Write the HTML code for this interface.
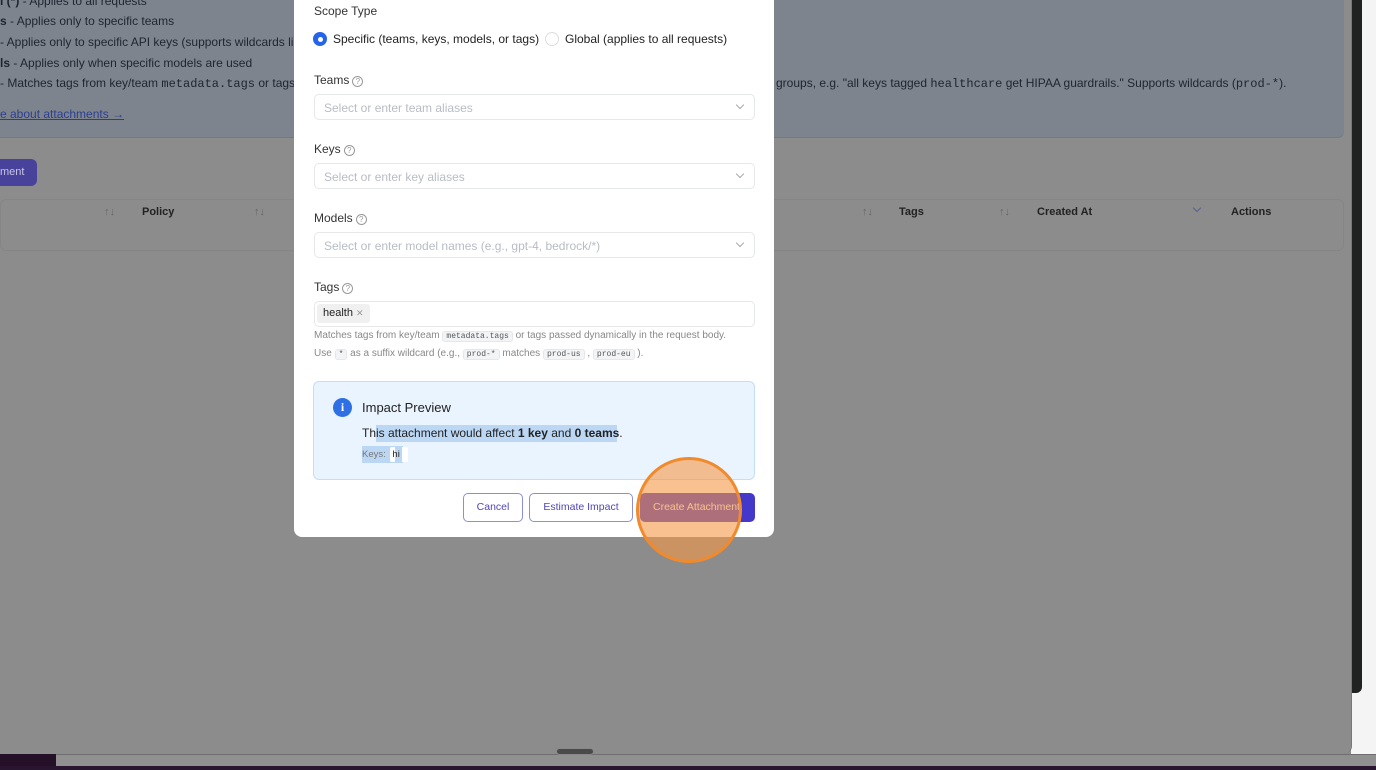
<!DOCTYPE html>
<html><head><meta charset="utf-8"><style>
*{box-sizing:border-box;margin:0;padding:0}
body{width:1376px;height:770px;overflow:hidden;background:#8c8c8c;font-family:"Liberation Sans",sans-serif;position:relative;color:#1f2937}
.a{position:absolute;white-space:nowrap}
.bgt{font-size:12px;color:#1e2530}
.mono{font-family:"Liberation Mono",monospace}
.lbl{font-size:12px;color:#333}
.sel{position:absolute;left:314px;width:441px;height:26px;border:1px solid #e5e7eb;border-radius:5px;background:#fff;font-size:12px;color:#b8bcc4;padding:6px 9px}
.sel::after{content:"";position:absolute;right:11px;top:7px;width:5px;height:5px;border-right:1px solid #aaa;border-bottom:1px solid #aaa;transform:rotate(45deg)}
.q{display:inline-block;width:11px;height:11px;border:1px solid #999;border-radius:50%;font-size:8px;line-height:9px;text-align:center;color:#999;vertical-align:0px;margin-left:3px}
code{font-family:"Liberation Mono",monospace;font-size:8px;background:#f3f4f6;border:1px solid #e5e7eb;border-radius:3px;padding:0 3px;color:#555}
.btn{position:absolute;top:493px;height:29px;border:1px solid #8b8fd8;border-radius:5px;background:#fff;font-size:10.5px;color:#4f46b5;text-align:center;line-height:27px;font-weight:500}
</style></head><body>
<div class="a" style="left:0;top:0;width:1344px;height:138px;background:#7e848d;border-bottom:1px solid #737a84;border-radius:0 0 6px 0"></div>
<div class="a bgt" style="left:0;top:-6px"><b>l (*)</b> - Applies to all requests</div>
<div class="a bgt" style="left:0;top:14px"><b>s</b> - Applies only to specific teams</div>
<div class="a bgt" style="left:0;top:35px">- Applies only to specific API keys (supports wildcards lik</div>
<div class="a bgt" style="left:0;top:56px"><b>ls</b> - Applies only when specific models are used</div>
<div class="a bgt" style="left:0;top:76px">- Matches tags from key/team <span class="mono">metadata.tags</span> or tags p</div>
<div class="a bgt" style="left:776px;top:76px">groups, e.g. "all keys tagged <span class="mono">healthcare</span> get HIPAA guardrails." Supports wildcards (<span class="mono">prod-*</span>).</div>
<div class="a bgt" style="left:0;top:107px;color:#2b3f8f;text-decoration:underline">e about attachments →</div>
<div class="a" style="left:-10px;top:159px;width:47px;height:27px;background:#48429a;border-radius:6px;color:#c6c4e8;font-size:11px;line-height:27px;padding-left:10px">ment</div>
<div class="a" style="left:0;top:199px;width:1344px;height:52px;border:1px solid #858585;border-radius:6px"></div>
<div class="a" style="left:104px;top:206px;font-size:11px;color:#666">↑↓</div>
<div class="a" style="left:142px;top:206px;font-size:11px;font-weight:bold;color:#222">Policy</div>
<div class="a" style="left:254px;top:206px;font-size:11px;color:#666">↑↓</div>
<div class="a" style="left:862px;top:206px;font-size:11px;color:#666">↑↓</div>
<div class="a" style="left:899px;top:206px;font-size:11px;font-weight:bold;color:#222">Tags</div>
<div class="a" style="left:999px;top:206px;font-size:11px;color:#666">↑↓</div>
<div class="a" style="left:1037px;top:206px;font-size:11px;font-weight:bold;color:#222">Created At</div>
<div class="a" style="left:1194px;top:205px;width:6px;height:6px;border-right:1px solid #5a6090;border-bottom:1px solid #5a6090;transform:rotate(45deg)"></div>
<div class="a" style="left:1231px;top:206px;font-size:11px;font-weight:bold;color:#222">Actions</div>
<div class="a" style="left:1351px;top:0;width:25px;height:770px;background:#f4f4f4"></div>
<div class="a" style="left:1351px;top:0;width:11px;height:693px;background:#1f2220;border-radius:0 0 6px 0"></div>
<div class="a" style="left:1344px;top:0;width:8px;height:754px;background:#8c8c8c;border-right:1px solid #777;border-radius:0 0 8px 0"></div>
<div class="a" style="left:0;top:754px;width:1376px;height:16px;background:#909090;border-top:1px solid #6e6e6e"></div>
<div class="a" style="left:0;top:754px;width:56px;height:16px;background:#241128"></div>
<div class="a" style="left:0;top:766px;width:1376px;height:4px;background:#2a1530"></div>
<div class="a" style="left:556px;top:748px;width:38px;height:7px;background:#4a4a4a;border-radius:4px;border:1px solid #888"></div>
<div class="a" style="left:294px;top:-10px;width:480px;height:547px;background:#fff;border-radius:8px"></div>
<div class="a lbl" style="left:314px;top:4px">Scope Type</div>
<div class="a" style="left:313px;top:32px;width:14px;height:14px;border-radius:50%;background:#2563eb"></div>
<div class="a" style="left:317.5px;top:36.5px;width:5px;height:5px;border-radius:50%;background:#fff"></div>
<div class="a" style="left:333px;top:32px;font-size:12px;color:#222">Specific (teams, keys, models, or tags)</div>
<div class="a" style="left:545px;top:32px;width:14px;height:14px;border-radius:50%;border:1px solid #ddd"></div>
<div class="a" style="left:565px;top:32px;font-size:12px;color:#222">Global (applies to all requests)</div>
<div class="a lbl" style="left:314px;top:73px">Teams<span class="q">?</span></div>
<div class="sel" style="top:94px">Select or enter team aliases</div>
<div class="a lbl" style="left:314px;top:142px">Keys<span class="q">?</span></div>
<div class="sel" style="top:163px">Select or enter key aliases</div>
<div class="a lbl" style="left:314px;top:211px">Models<span class="q">?</span></div>
<div class="sel" style="top:232px">Select or enter model names (e.g., gpt-4, bedrock/*)</div>
<div class="a lbl" style="left:314px;top:280px">Tags<span class="q">?</span></div>
<div class="a" style="left:314px;top:301px;width:441px;height:26px;border:1px solid #e5e7eb;border-radius:5px"></div>
<div class="a" style="left:317px;top:304px;width:53px;height:19px;background:#f0f0f0;border-radius:3px;font-size:11px;color:#222;padding:3px 6px">health <span style="color:#999;font-size:9px">✕</span></div>
<div class="a" style="left:314px;top:330px;font-size:10px;color:#888">Matches tags from key/team <code>metadata.tags</code> or tags passed dynamically in the request body.</div>
<div class="a" style="left:314px;top:348px;font-size:10px;color:#888">Use <code>*</code> as a suffix wildcard (e.g., <code>prod-*</code> matches <code>prod-us</code> , <code>prod-eu</code> ).</div>
<div class="a" style="left:313px;top:381px;width:442px;height:99px;background:#eaf4fe;border:1px solid #c3def8;border-radius:6px"></div>
<div class="a" style="left:333px;top:398px;width:19px;height:19px;border-radius:50%;background:#2f6fe4;color:#fff;font-size:12px;font-weight:bold;text-align:center;line-height:19px;font-family:'Liberation Serif',serif">i</div>
<div class="a" style="left:362px;top:400px;font-size:13px;color:#222">Impact Preview</div>
<div class="a" style="left:376px;top:425px;width:241px;height:17px;background:#bcd7f4"></div>
<div class="a" style="left:362px;top:426px;font-size:12px;color:#222">This attachment would affect <b>1 key</b> and <b>0 teams</b>.</div>
<div class="a" style="left:362px;top:446px;width:41px;height:17px;background:#bcd7f4"></div>
<div class="a" style="left:390px;top:447px;width:18px;height:15px;background:#fff;border-radius:2px"></div>
<div class="a" style="left:395px;top:447px;width:7px;height:15px;background:#bcd7f4"></div>
<div class="a" style="left:362px;top:449px;font-size:9.5px;color:#777">Keys: <span style="color:#222;margin-left:4px">hi</span></div>
<div class="btn" style="left:463px;width:60px">Cancel</div>
<div class="btn" style="left:529px;width:104px">Estimate Impact</div>
<div class="btn" style="left:640px;width:115px;background:#4338ca;border-color:#4338ca;color:#fff;text-align:left;padding-left:12px;overflow:hidden">Create Attachment</div>
<div class="a" style="left:636px;top:457px;width:106px;height:106px;border-radius:50%;border:3px solid #f08a2c;background:rgba(245,150,70,0.6)"></div>
</body></html>
